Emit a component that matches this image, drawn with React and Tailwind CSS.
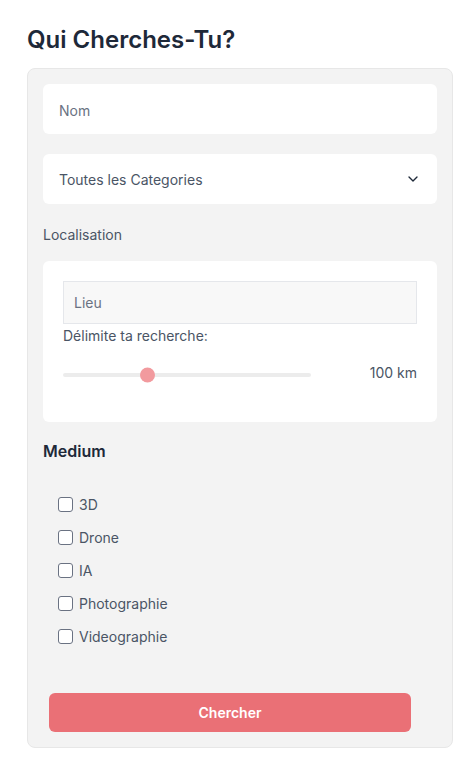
import React, { useState } from 'react';
import { ChevronDown } from 'lucide-react';

const mediums = ['3D', 'Drone', 'IA', 'Photographie', 'Videographie'];

const App = () => {
  const [checked, setChecked] = useState({});

  const toggle = (name) => {
    setChecked({ ...checked, [name]: !checked[name] });
  };

  return (
    <div className="min-h-screen bg-white pt-6 pl-[27px] font-['Inter',sans-serif]">
      {/* Title */}
      <h1 className="text-2xl leading-8 font-semibold text-gray-800">Qui Cherches-Tu?</h1>

      {/* Search card */}
      <div className="mt-3 w-[426px] rounded-lg border border-[#e7e7e7] bg-[#f3f3f3] p-[15px]">
        {/* Nom */}
        <div className="flex h-[50px] items-center rounded-md bg-white px-4 pt-[3px] text-sm text-gray-500">
          Nom
        </div>

        {/* Categories */}
        <div className="mt-[20px] flex h-[50px] items-center justify-between rounded-md bg-white pl-4 pr-4 text-sm text-gray-600">
          <span className="pt-[2px]">Toutes les Categories</span>
          <ChevronDown size={16} strokeWidth={2} className="text-gray-800" />
        </div>

        {/* Localisation */}
        <div className="mt-[21px] text-sm leading-5 text-gray-600">Localisation</div>
        <div className="mt-[16px] rounded-md bg-white px-5 pt-5 pb-[37px]">
          <div className="flex h-[43px] items-center border border-gray-200 bg-[#f8f8f8] px-[10px] pt-[1px] text-sm text-gray-500">
            Lieu
          </div>
          <div className="mt-[2px] text-sm leading-5 text-gray-600">Délimite ta recherche:</div>
          <div className="mt-[19px] flex h-5 items-center justify-between">
            <div className="relative h-1 w-[248px] rounded-full bg-[#ececec]">
              <div className="absolute top-1/2 left-[77px] h-[15px] w-[15px] -translate-y-1/2 rounded-full bg-[#f29a9e]" />
            </div>
            <span className="-mt-1 text-sm text-gray-600">100 km</span>
          </div>
        </div>

        {/* Medium */}
        <h2 className="mt-[17px] text-base leading-6 font-semibold text-gray-800">Medium</h2>
        <ul className="mt-[25px] pl-[15px]">
          {mediums.map((m) => (
            <li
              key={m}
              className="flex h-[33px] cursor-pointer items-center gap-[6px] text-sm text-gray-600"
              onClick={() => toggle(m)}
            >
              <span
                className={`h-[15px] w-[15px] rounded-[3px] border border-gray-500 ${
                  checked[m] ? 'bg-gray-500' : 'bg-white'
                }`}
              />
              <span>{m}</span>
            </li>
          ))}
        </ul>

        {/* Submit */}
        <button className="mt-[40px] ml-[6px] h-[39px] w-[362px] rounded-md bg-[#ea7076] text-sm font-semibold text-white">
          Chercher
        </button>
      </div>
    </div>
  );
};

export default App;
